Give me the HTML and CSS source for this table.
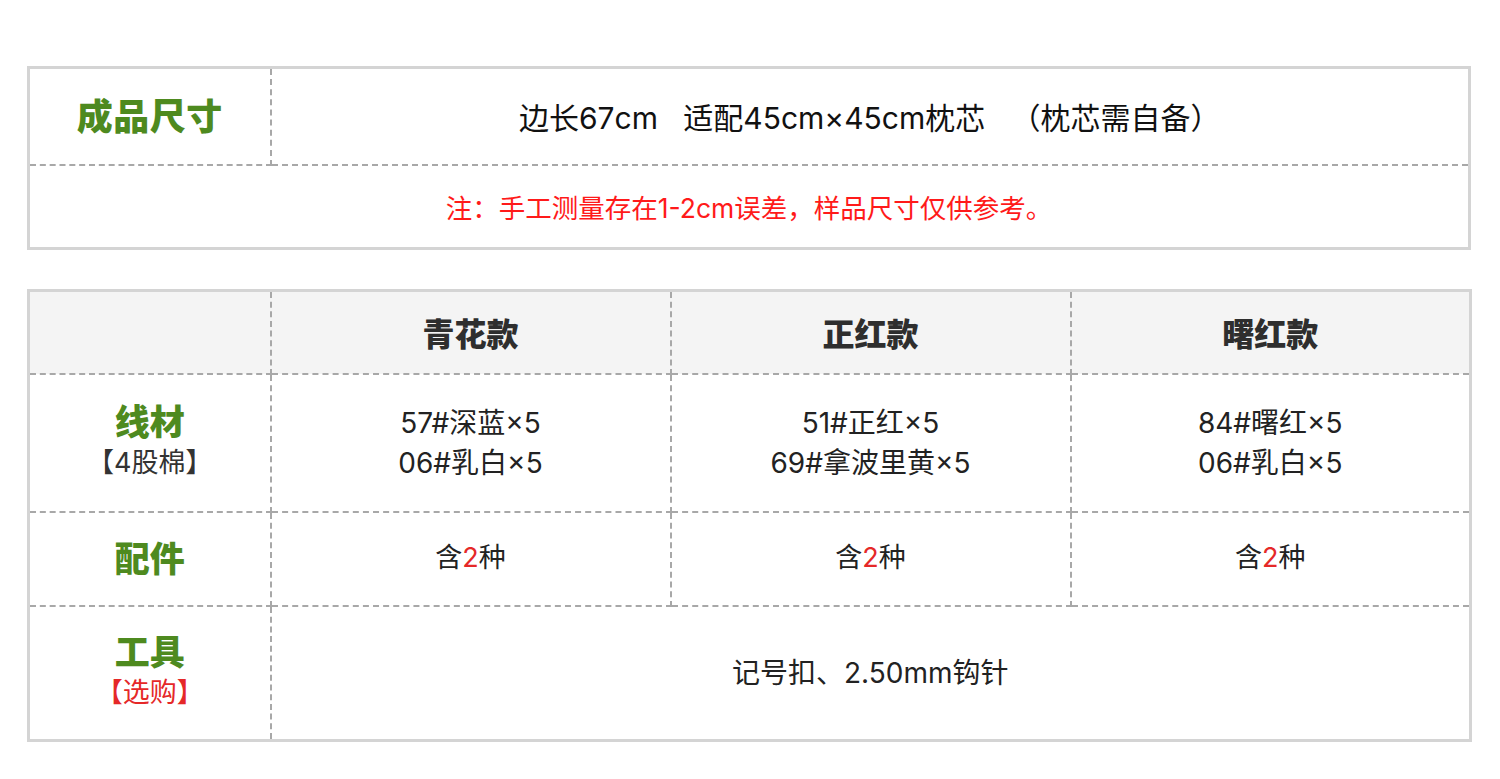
FILE: index.html
```html
<!DOCTYPE html>
<html lang="zh-CN">
<head>
<meta charset="utf-8">
<title>尺寸与材料</title>
<link rel="stylesheet" href="styles.css">
</head>
<body>
<div class="page">
  <table class="spec size-table">
    <colgroup><col class="c-label"><col class="c-rest"></colgroup>
    <tr class="r-size">
      <th class="label">成品尺寸</th>
      <td class="size-text">边长67cm&nbsp;&nbsp;&nbsp;适配45cm×45cm枕芯&nbsp;&nbsp;&nbsp;（枕芯需自备）</td>
    </tr>
    <tr class="r-note">
      <td class="note" colspan="2">注：手工测量存在1-2cm误差，样品尺寸仅供参考。</td>
    </tr>
  </table>

  <table class="spec mat-table">
    <colgroup><col class="c-label"><col class="c-var"><col class="c-var"><col class="c-var"></colgroup>
    <tr class="r-head">
      <th class="blank"></th>
      <th class="head">青花款</th>
      <th class="head">正红款</th>
      <th class="head">曙红款</th>
    </tr>
    <tr class="r-yarn">
      <th class="label"><div class="lbl">线材</div><div class="sub">【4股棉】</div></th>
      <td class="val">57#深蓝×5<br>06#乳白×5</td>
      <td class="val">51#正红×5<br>69#拿波里黄×5</td>
      <td class="val">84#曙红×5<br>06#乳白×5</td>
    </tr>
    <tr class="r-acc">
      <th class="label"><div class="lbl">配件</div></th>
      <td class="val">含<span class="red">2</span>种</td>
      <td class="val">含<span class="red">2</span>种</td>
      <td class="val">含<span class="red">2</span>种</td>
    </tr>
    <tr class="r-tool">
      <th class="label"><div class="lbl">工具</div><div class="sub red">【选购】</div></th>
      <td class="val tool" colspan="3">记号扣、2.50mm钩针</td>
    </tr>
  </table>
</div>
</body>
</html>
```

FILE: styles.css
```css
html, body {
  margin: 0;
  padding: 0;
  background: #ffffff;
}
body {
  font-family: Inter, "Noto Sans CJK SC", sans-serif;
  color: #222222;
}
.page {
  padding: 66px 0 0 27px;
  display: flex;
  flex-direction: column;
  gap: 39px;
}
.spec {
  width: 1444px;
  table-layout: fixed;
  border-collapse: collapse;
  border: 3px solid #d4d4d4;
}
.spec th, .spec td {
  border: 2px dashed #a8a8a8;
  padding: 0;
  text-align: center;
  vertical-align: middle;
}
.c-label { width: 242px; }
.c-var { width: 400px; }

.label {
  color: #4e8a1f;
  font-weight: 900;
}
.size-table .label {
  font-size: 36px;
  letter-spacing: 0.5px;
  padding-bottom: 4px;
}
.r-size { height: 97px; }
.r-note { height: 84px; }
.size-text {
  font-size: 30px;
  color: #111111;
  padding-bottom: 9px;
}
.note {
  font-size: 26.5px;
  color: #ff1a1a;
  padding-bottom: 6px;
}

.r-head { height: 83px; }
.r-head th { background: #f4f4f4; }
.head {
  font-size: 32px;
  font-weight: 900;
  color: #2e2e2e;
  padding-bottom: 6px;
}
.r-yarn { height: 138px; }
.r-acc { height: 94px; }
.r-tool { height: 135px; }

.lbl {
  font-size: 35px;
  line-height: 40px;
}
.sub {
  font-size: 27px;
  font-weight: 400;
  color: #333333;
  line-height: 42px;
}
.val {
  font-size: 28px;
  line-height: 40px;
  color: #222222;
  padding-bottom: 6px;
}
.r-acc .val { padding-bottom: 2px; font-size: 27px; }
.red { color: #e52828; }
.sub.red { color: #e52828; }
.tool { font-size: 28px; }
```
